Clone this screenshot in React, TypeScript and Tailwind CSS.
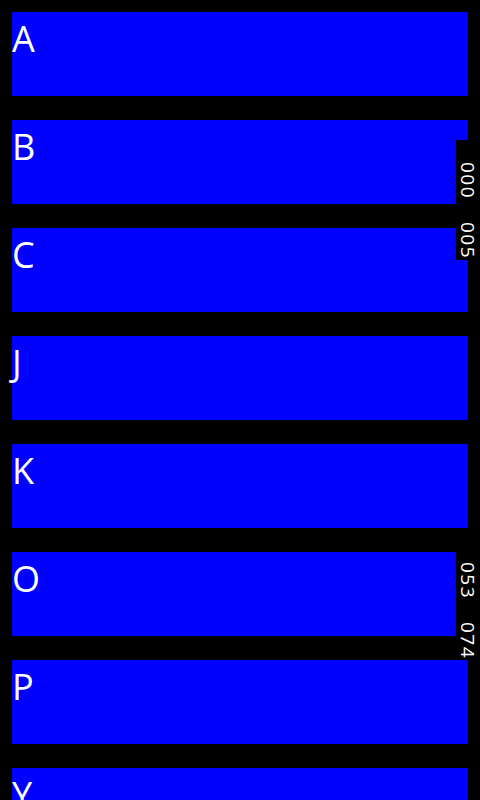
const letters = ["A", "B", "C", "J", "K", "O", "P", "Y"];

const markers = [
  { top: "top-[140px]", labels: ["000", "005"] },
  { top: "top-[540px]", labels: ["053", "074"] },
];

export default function App() {
  return (
    <div className="relative h-[800px] w-[480px] overflow-hidden bg-black font-['Open_Sans',sans-serif] text-white">
      <div className="flex flex-col gap-6 p-3">
        {letters.map((l) => (
          <div key={l} className="h-[84px] shrink-0 bg-[#0000ff]">
            <p className="text-[36px] leading-[50px] mt-[2px]">{l}</p>
          </div>
        ))}
      </div>
      {markers.map((m) => (
        <div key={m.top} className={`absolute right-0 ${m.top} flex w-6 flex-col bg-black`}>
          {m.labels.map((t) => (
            <div key={t} className="flex h-[60px] flex-col items-center justify-end pb-[1px]">
              <span className="[writing-mode:vertical-rl] text-[19px] font-medium leading-6 tracking-[1.5px]">{t}</span>
            </div>
          ))}
        </div>
      ))}
    </div>
  );
}
